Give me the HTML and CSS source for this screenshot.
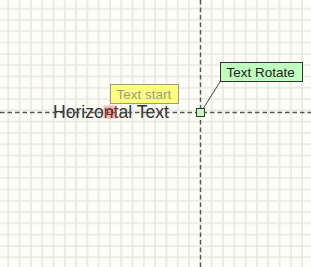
FILE: index.html
```html
<!DOCTYPE html>
<html lang="en">
<head>
  <meta charset="UTF-8">
  <title>Text Rotate</title>
  <link rel="stylesheet" href="styles.css">
</head>
<body>
  <svg class="canvas" width="311" height="267" viewBox="0 0 311 267">
    <defs>
      <pattern id="grid" patternUnits="userSpaceOnUse" x="7.3" y="7.7" width="11.3" height="11.3">
        <path class="grid-line" d="M1 0 V11.3 M0 1 H11.3"/>
      </pattern>
    </defs>
    <rect class="paper" width="311" height="267"/>
    <rect width="311" height="267" fill="url(#grid)"/>

    <!-- the text itself -->
    <text class="main-text" x="111" y="117.5">Horizontal Text</text>

    <!-- axes -->
    <line class="axis" x1="0" y1="112.5" x2="311" y2="112.5"/>
    <line class="axis" x1="200.5" y1="0" x2="200.5" y2="267"/>

    <!-- start handle -->
    <rect class="start-zone" x="103.5" y="105.5" width="13" height="13"/>
    <rect class="start-dot" x="107.5" y="109.5" width="5" height="5"/>

    <!-- rotate handle -->
    <line class="leader" x1="203" y1="109" x2="220.5" y2="81"/>
    <rect class="rotate-dot" x="196.5" y="108.5" width="8" height="8"/>

    <!-- labels -->
    <rect class="label-start" x="110.5" y="84.5" width="68" height="19"/>
    <text class="label-start-text" x="116.5" y="99">Text start</text>

    <rect class="label-rotate" x="220.5" y="62.5" width="82" height="19"/>
    <text class="label-rotate-text" x="226.5" y="77">Text Rotate</text>
  </svg>
</body>
</html>
```

FILE: styles.css
```css
body {
  margin: 0;
  background: #fefef7;
  font-family: "Liberation Sans", Arial, sans-serif;
  overflow: hidden;
}

.canvas {
  display: block;
}

.paper {
  fill: #fefef7;
}

.grid-line {
  fill: none;
  stroke: #e6e6e3;
  stroke-width: 1.5;
}

.main-text {
  font-size: 17.6px;
  fill: #333;
  text-anchor: middle;
}

.axis {
  stroke: #555;
  stroke-width: 1.4;
  stroke-dasharray: 4.5 3;
}

.start-zone {
  fill: rgba(255, 60, 60, 0.35);
  stroke: none;
}

.start-dot {
  fill: none;
  stroke: #444;
  stroke-width: 1;
}

.leader {
  stroke: #444;
  stroke-width: 1;
}

.rotate-dot {
  fill: #c0ffc0;
  stroke: #333;
  stroke-width: 1;
}

.label-start {
  fill: rgba(255, 255, 110, 0.85);
  stroke: #9a9a88;
  stroke-width: 1;
}

.label-start-text {
  font-size: 13.5px;
  fill: #9c9c80;
}

.label-rotate {
  fill: #c0ffc0;
  stroke: #333;
  stroke-width: 1;
}

.label-rotate-text {
  font-size: 13.5px;
  fill: #222;
}
```
